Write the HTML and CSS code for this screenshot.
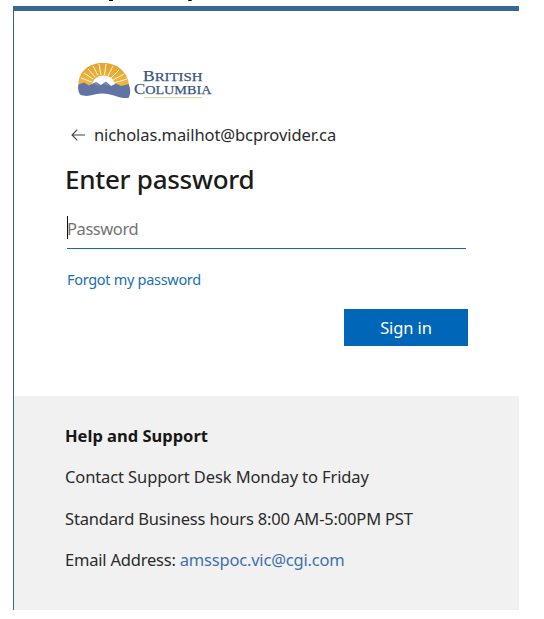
FILE: index.html
```html
<!DOCTYPE html>
<html lang="en">
<head>
<meta charset="utf-8">
<title>Enter password</title>
<link rel="stylesheet" href="styles.css">
</head>
<body>
<svg class="overflow-strip" viewBox="0 0 544 6" aria-hidden="true"><path d="M109 0h4v1h-4zM188 0h4l-.7 1h-2.8z"/></svg>
<main class="card">
  <section class="sign-in">
    <svg class="logo" viewBox="77 60 136 40" role="img" aria-label="British Columbia">
      <defs><linearGradient id="sun" x1="0" y1="0" x2="0" y2="1"><stop offset="0" stop-color="#e2a22f"/><stop offset="1" stop-color="#f5bd45"/></linearGradient></defs>
      <path d="M78.300 84C79 71 89 63 103 63s23.500 7.500 26 21L117 90H90z" fill="url(#sun)"/>
      <path d="M92 86a11.500 10.500 0 0 1 23 0z" fill="#fff"/>
      <path d="M92 82L81 78M93 79L84 73M95 77L88 69M98 75.500L93 66M101 75L99 64M104.500 75L106 64M108 76L113 66M111 78L119 70M113 80L124 74M114 83L127 79" stroke="#fff5d7" stroke-width="1"/>
      <path d="M78.300 84.500L84 82.500L89 85.500L96 82L101 85L106 81.500L111 86L116 83.500L121 86L128.500 84C131 89 130.500 95 128.500 98C119 99 112 93 101 93.500C93 94 88 98 80 94.500C78 91 77.800 88 78.300 84.500Z" fill="#6075a3"/>
      <path d="M94 84l2-1.600 4 3.600-3-1zM104 84.500l2-2.500 3.500 4-3-1.500z" fill="#8494b7"/>
      <g class="logo-text">
        <text x="143" y="80.800" font-size="15.500" textLength="59.500" lengthAdjust="spacingAndGlyphs">B<tspan font-size="13.200">RITISH</tspan></text>
        <text x="134" y="94" font-size="15.500" textLength="77.500" lengthAdjust="spacingAndGlyphs">C<tspan font-size="13.200">OLUMBIA</tspan></text>
      </g>
      <path d="M144 97.700h58" stroke="#ead6a8" stroke-width="1.200"/>
    </svg>
    <div class="identity">
      <svg class="back" viewBox="0 0 14 12" aria-hidden="true"><path d="M14 6H1M6.300.7L1 6l5.300 5.300"/></svg>
      <span class="account">nicholas.mailhot@bcprovider.ca</span>
    </div>
    <h1><span>Enter password</span></h1>
    <div class="field"><i class="caret"></i><span>Password</span></div>
    <a class="forgot">Forgot my password</a>
    <button type="button"><span>Sign in</span></button>
  </section>
  <section class="support">
    <h2>Help and Support</h2>
    <p class="desk">Contact Support Desk Monday to Friday</p>
    <p class="hours">Standard Business hours 8:00 AM-5:00PM PST</p>
    <p class="email">Email Address: <a>amsspoc.vic@cgi.com</a></p>
  </section>
</main>
</body>
</html>
```
FILE: styles.css
```css
* { box-sizing: border-box; }
body { margin: 0; background: #fff; color: #2b2b2b; font-family: "Noto Sans", "Open Sans", sans-serif; font-size: 16.5px; white-space: nowrap; overflow: hidden; }
.overflow-strip { display: block; width: 544px; height: 6px; }
.card { width: 506px; height: 604px; margin-left: 13px; background: linear-gradient(#376486, #376486) left / 1px 100% no-repeat; border-top: 5px solid #376794; padding-left: 1px; }
.sign-in { display: flex; flex-direction: column; height: 385px; padding: 49px 51px 0; }
.logo { width: 136px; height: 40px; margin-left: 12px; flex: none; }
.logo-text { fill: #385582; stroke: #385582; stroke-width: .25px; font-family: "Liberation Serif", serif; }
.identity { display: flex; align-items: center; height: 24px; margin: 22px 0 0 6px; }
.back { width: 14px; height: 12px; margin: 1px 9px 0 0; fill: none; stroke: #444; stroke-width: 1.1; }
.account { letter-spacing: -.09px; }
h1 { margin: 14px 0 0; height: 38px; line-height: 38px; font-size: 26px; font-weight: 500; letter-spacing: -.27px; color: #1b1b1b; }
.field { display: flex; align-items: center; width: 399px; height: 40px; margin: 11px 0 0 2px; padding-bottom: 1px; border-bottom: 1px solid #1769a5; color: #747474; letter-spacing: -.43px; }
.caret { width: 1px; height: 23px; margin: -2px -1px 0 0; background: #111; }
.forgot { height: 20px; margin: 20px 0 0 2px; line-height: 20px; font-size: 14.5px; letter-spacing: -.3px; color: #176fb5; }
button { align-self: flex-start; width: 124px; height: 37px; margin: 20px 0 0 279px; padding: 0; border: 0; background: #0067b8; color: #fff; font: inherit; letter-spacing: -.1px; }
.support { height: 214px; padding: 28px 51px; background: #f1f1f1; }
h2, p { margin: 0 0 17.4px; height: 24px; line-height: 24px; font-size: 16.5px; }
h2 { font-weight: 700; letter-spacing: 0; color: #171717; }
.desk { letter-spacing: -.11px; }
.hours { letter-spacing: -.17px; }
.email { letter-spacing: -.2px; }
.support a { color: #3e70ad; }
```
